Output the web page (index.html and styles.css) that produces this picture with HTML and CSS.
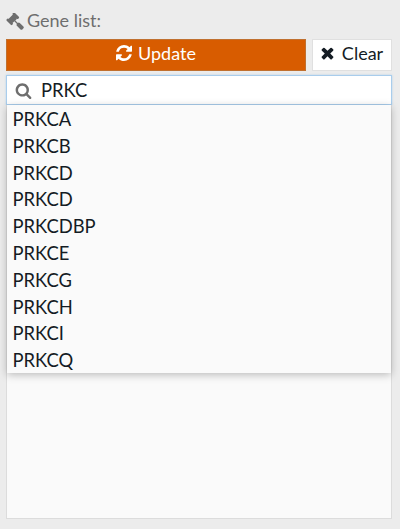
FILE: index.html
```html
<html>

<head>
  <title>Gene list</title>
  <link rel="stylesheet" href="styles.css">
</head>

<body>
  <section class="gene-panel">
    <label class="gene-label">
      <svg class="icon icon-gavel" viewBox="0 0 1792 1792"><path d="M1771 1440q0 53-37 90l-107 108q-39 37-91 37-53 0-90-37l-363-364q-38-36-38-90 0-53 43-96l-256-256-126 126q-14 14-34 14t-34-14q2 2 12.5 12t12.5 13 10 11.5 10 13.5 6 13.5 5.5 16.5 1.5 18q0 38-28 68-3 3-16.5 18t-19 20.5-18.5 16.5-22 15.5-22 9-26 4.5q-40 0-68-28l-408-408q-28-28-28-68 0-13 4.5-26t9-22 15.5-22 16.5-18.5 20.5-19 18-16.5q30-28 68-28 10 0 18 1.5t16.5 5.5 13.5 6 13.5 10 11.5 10 13 12.5 12 12.5q-14-14-14-34t14-34l348-348q14-14 34-14t34 14q-2-2-12.5-12t-12.5-13-10-11.5-10-13.5-6-13.5-5.5-16.5-1.5-18q0-38 28-68 3-3 16.5-18t19-20.5 18.5-16.5 22-15.5 22-9 26-4.5q40 0 68 28l408 408q28 28 28 68 0 13-4.5 26t-9 22-15.5 22-16.5 18.5-20.5 19-18 16.5q-30 28-68 28-10 0-18-1.5t-16.5-5.5-13.5-6-13.5-10-11.5-10-13-12.5-12-12.5q14 14 14 34t-14 34l-126 126 256 256q43-43 96-43 52 0 91 37l363 363q37 39 37 91z"/></svg>
      Gene list:
    </label>

    <div class="gene-actions">
      <button class="btn btn-update">
        <svg class="icon icon-refresh" viewBox="0 0 1536 1536"><path d="M1511 928q0 5-1 7-64 268-268 434.5t-478 166.5q-146 0-282.5-55t-243.5-157l-129 129q-19 19-45 19t-45-19-19-45v-448q0-26 19-45t45-19h448q26 0 45 19t19 45-19 45l-137 137q71 66 161 102t187 36q134 0 250-65t186-179q11-17 53-117 8-23 30-23h192q13 0 22.5 9.5t9.5 22.5zm25-800v448q0 26-19 45t-45 19h-448q-26 0-45-19t-19-45 19-45l138-138q-148-137-349-137-134 0-250 65t-186 179q-11 17-53 117-8 23-30 23h-199q-13 0-22.5-9.5t-9.5-22.5v-7q65-268 270-434.5t480-166.5q146 0 284 55.5t245 156.5l130-129q19-19 45-19t45 19 19 45z"/></svg>
        Update
      </button>
      <button class="btn btn-clear">
        <svg class="icon icon-times" viewBox="100 200 1208 1408"><path d="M1298 1322q0 40-28 68l-136 136q-28 28-68 28t-68-28l-294-294-294 294q-28 28-68 28t-68-28l-136-136q-28-28-28-68t28-68l294-294-294-294q-28-28-28-68t28-68l136-136q28-28 68-28t68 28l294 294 294-294q28-28 68-28t68 28l136 136q28 28 28 68t-28 68l-294 294 294 294q28 28 28 68z"/></svg>
        Clear
      </button>
    </div>

    <div class="gene-search">
      <svg class="icon icon-search" viewBox="0 0 1792 1792"><path d="M1216 832q0-185-131.500-316.500t-316.500-131.500-316.500 131.500-131.500 316.500 131.500 316.500 316.500 131.500 316.500-131.500 131.500-316.500zm512 832q0 52-38 90t-90 38q-54 0-90-38l-343-342q-179 124-399 124-143 0-273.500-55.500t-225-150-150-225-55.500-273.500 55.500-273.500 150-225 225-150 273.500-55.500 273.500 55.500 225 150 150 225 55.500 273.500q0 220-124 399l343 343q37 37 37 90z"/></svg>
      <input type="text" class="gene-input" value="PRKC" />
    </div>

    <div class="gene-results">
      <div class="gene-box"></div>
      <ul class="gene-menu">
        <li>PRKCA</li>
        <li>PRKCB</li>
        <li>PRKCD</li>
        <li>PRKCD</li>
        <li>PRKCDBP</li>
        <li>PRKCE</li>
        <li>PRKCG</li>
        <li>PRKCH</li>
        <li>PRKCI</li>
        <li>PRKCQ</li>
      </ul>
    </div>
  </section>
</body>

</html>
```

FILE: styles.css
```css
html,
body {
  height: 100%;
}

body {
  background-color: #ececec;
  color: #141c24;
  font-family: "Lato", sans-serif;
  font-size: 18px;
  margin: 0;
}

.gene-panel {
  box-sizing: border-box;
  display: flex;
  flex-direction: column;
  height: 100%;
  padding: 9px 8px 10px 6px;
}

.gene-label {
  align-items: center;
  color: #6e6e6e;
  display: flex;
  gap: 3px;
  height: 22px;
  margin-bottom: 8px;
}

.icon {
  fill: currentColor;
  flex-shrink: 0;
}

.icon-gavel {
  height: 18px;
  margin-top: 3px;
  width: 18px;
}

.gene-actions {
  display: flex;
  gap: 6px;
  height: 32px;
  margin-bottom: 4px;
}

.btn {
  align-items: center;
  border-radius: 0;
  border-style: solid;
  border-width: 1px;
  display: flex;
  font-family: inherit;
  font-size: 18px;
  gap: 6px;
  justify-content: center;
  padding: 0 0 4px;
}

.btn-update {
  background-color: #d85c00;
  border-color: #c0702f;
  color: #fff;
  width: 300px;
}

.icon-refresh {
  height: 16px;
  width: 16px;
}

.btn-clear {
  background-color: #fff;
  border-color: #e0e0e0;
  color: #141c24;
  gap: 8px;
  width: 80px;
}

.icon-times {
  height: 14px;
  width: 13px;
}

.gene-search {
  align-items: center;
  background-color: #fff;
  border: 1px solid #a9cdec;
  box-shadow: 0 0 2px rgba(102, 175, 233, 0.4);
  box-sizing: border-box;
  display: flex;
  gap: 9px;
  height: 30px;
  padding-left: 8px;
}

.icon-search {
  color: #6e6e6e;
  height: 17px;
  width: 17px;
}

.gene-input {
  background: none;
  border: 0;
  color: #141c24;
  flex-grow: 1;
  font-family: inherit;
  font-size: 18.4px;
  min-width: 0;
  outline: none;
  padding: 0;
}

.gene-results {
  flex-grow: 1;
  position: relative;
}

.gene-box {
  background-color: #fafafa;
  border: 1px solid #dcdcdc;
  border-top: 0;
  box-sizing: border-box;
  height: 100%;
}

.gene-menu {
  background-color: #fafafa;
  box-shadow: 0 2px 8px rgba(0, 0, 0, 0.25);
  font-size: 18.4px;
  left: 1px;
  list-style: none;
  margin: 0;
  padding: 0;
  position: absolute;
  right: 1px;
  top: 0;
}

.gene-menu li {
  height: 26.8px;
  line-height: 28.4px;
  padding-left: 5.5px;
}
```
